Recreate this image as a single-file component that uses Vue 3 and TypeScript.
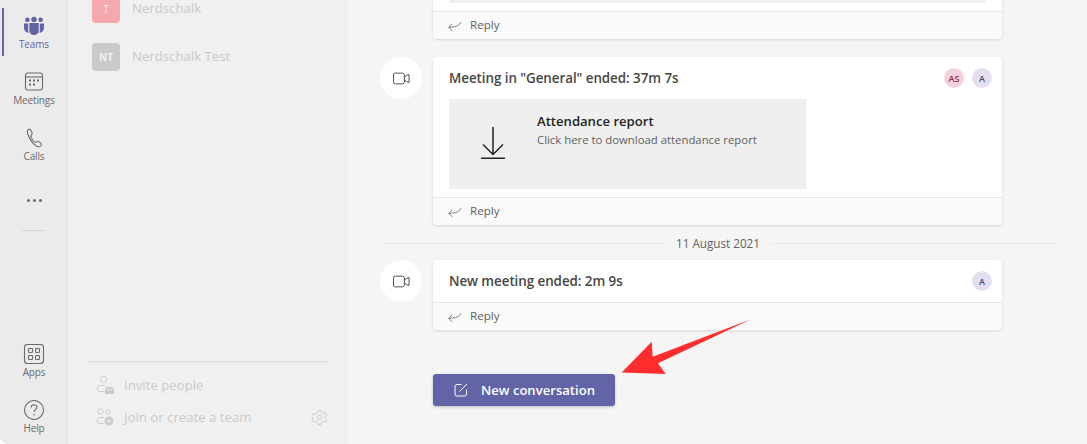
<script setup lang="ts">
interface NavItem { label: string; icon: string; active?: boolean }
const topNav: NavItem[] = [
  { label: 'Teams', icon: 'teams', active: true },
  { label: 'Meetings', icon: 'meetings' },
  { label: 'Calls', icon: 'calls' },
]
const bottomNav: NavItem[] = [
  { label: 'Apps', icon: 'apps' },
  { label: 'Help', icon: 'help' },
]
const teams = [
  { initials: 'T', name: 'Nerdschalk', tone: 'pink' },
  { initials: 'NT', name: 'Nerdschalk Test', tone: 'grey' },
]
</script>

<template>
  <div class="window">
    <nav class="rail">
      <div class="rail-group">
        <div v-for="item in topNav" :key="item.label" class="nav-item" :class="{ active: item.active }">
          <svg class="nav-icon" width="22" height="20" viewBox="0 0 22 20">
            <template v-if="item.icon === 'teams'">
              <circle cx="11" cy="3.400" r="2.700" fill="currentColor" />
              <circle cx="4.400" cy="3.800" r="2.300" fill="currentColor" />
              <circle cx="17.600" cy="3.800" r="2.300" fill="currentColor" />
              <path d="M1 7.500h4.200v7.100c0 .9.2 1.600.5 2.200C3 16.800 1 14.500 1 11.800zM16.800 7.500H21v4.300c0 2.700-2 5-4.700 5 .3-.6.500-1.300.500-2.200z" fill="currentColor" />
              <path d="M6.300 7h9.400v7.400c0 2.700-2.100 4.600-4.700 4.600s-4.700-1.900-4.700-4.600z" fill="currentColor" />
            </template>
            <template v-else-if="item.icon === 'meetings'">
              <rect x="2.500" y="1" width="17" height="17" rx="2.500" fill="none" stroke="currentColor" stroke-width="1.100" />
              <path d="M2.500 5h17" stroke="currentColor" stroke-width="1.100" />
              <g fill="currentColor">
                <rect x="6" y="7.500" width="2" height="2" /><rect x="10" y="7.500" width="2" height="2" /><rect x="14" y="7.500" width="2" height="2" />
                <rect x="6" y="11.500" width="2" height="2" /><rect x="10" y="11.500" width="2" height="2" />
              </g>
            </template>
            <path v-else d="M6 1.200C4 1.800 4.200 4 4.800 6c1 3.400 3 7 5.800 9.800 1.600 1.600 3.800 3 5.600 2.900 1.600-.1 2.300-1.500 2.100-2.600-.2-.9-2.700-2.800-3.700-2.800-1.100 0-1.400 1.200-2.300 1.200-1.300 0-4.400-4.600-4.400-6.400 0-1 1.100-1.200 1.200-2.300C9.200 4.300 7.600.7 6 1.200z" fill="none" stroke="currentColor" stroke-width="1.100" />
          </svg>
          <span class="nav-label">{{ item.label }}</span>
        </div>
        <div class="more"><i></i><i></i><i></i></div>
        <div class="rail-rule"></div>
      </div>
      <div class="rail-group bottom">
        <div v-for="item in bottomNav" :key="item.label" class="nav-item">
          <svg class="nav-icon" width="22" height="20" viewBox="0 0 22 20">
            <template v-if="item.icon === 'apps'">
              <rect x="1.500" y="0.500" width="19" height="19" rx="3" fill="none" stroke="currentColor" stroke-width="1.100" />
              <g fill="none" stroke="currentColor" stroke-width="1.100">
                <rect x="5.500" y="4.500" width="4" height="4" rx=".8" /><rect x="12.500" y="4.500" width="4" height="4" rx=".8" />
                <rect x="5.500" y="11.500" width="4" height="4" rx=".8" /><rect x="12.500" y="11.500" width="4" height="4" rx=".8" />
              </g>
            </template>
            <template v-else>
              <circle cx="11" cy="10" r="9.500" fill="none" stroke="currentColor" stroke-width="1.100" />
              <path d="M8.200 7.600c0-1.700 1.300-2.800 2.900-2.800s2.800 1.100 2.800 2.500c0 2.100-2.900 2.400-2.900 4.700" fill="none" stroke="currentColor" stroke-width="1.100" />
              <circle cx="11" cy="14.700" r=".8" fill="currentColor" />
            </template>
          </svg>
          <span class="nav-label">{{ item.label }}</span>
        </div>
      </div>
    </nav>

    <aside class="panel">
      <ul class="team-list">
        <li v-for="team in teams" :key="team.name" class="team">
          <span class="team-avatar" :class="team.tone">{{ team.initials }}</span>
          <span class="team-name">{{ team.name }}</span>
        </li>
      </ul>
      <div class="panel-foot">
        <div class="foot-row">
          <svg width="18" height="18" viewBox="0 0 18 18" fill="none" stroke="currentColor">
            <circle cx="7.500" cy="3.500" r="3" />
            <path d="M9 9.500H4a3 3 0 0 0 0 6h4" />
            <path d="M9 11h9v7H9z" fill="currentColor" stroke="none" />
            <path d="M9 11.500l4.500 3 4.500-3" stroke="#f0f0f0" />
          </svg>
          <span>Invite people</span>
        </div>
        <div class="foot-row">
          <svg width="18" height="18" viewBox="0 0 18 18" fill="none" stroke="currentColor">
            <circle cx="4.500" cy="3.500" r="2.600" />
            <circle cx="12" cy="4" r="2.200" />
            <path d="M8 9.500H4a3 3 0 0 0 0 6h3.500" />
            <circle cx="13" cy="13" r="4.500" fill="currentColor" stroke="none" />
            <path d="M13 10.800v4.400M10.800 13h4.400" stroke="#f0f0f0" />
          </svg>
          <span class="grow">Join or create a team</span>
          <svg class="gear" width="17" height="17" viewBox="0 0 18 18" fill="none" stroke="currentColor">
            <circle cx="9" cy="9" r="2.300" />
            <path d="M7.500 1.500h3l.5 2.300 1.700 1 2.300-.7 1.500 2.600-1.700 1.600v1.400l1.700 1.600-1.500 2.600-2.300-.7-1.700 1-.5 2.300h-3l-.5-2.300-1.700-1-2.300.7L.5 12.300l1.700-1.600V9.300L.5 7.700 2 5.100l2.300.7 1.700-1z" />
          </svg>
        </div>
      </div>
    </aside>

    <main class="feed">
      <div class="thread">
        <div class="spacer"></div>
        <article class="card clipped">
          <div class="attach-stub"></div>
          <footer class="reply">
            <svg class="reply-icon" width="15" height="11" viewBox="0 0 15 11" fill="none" stroke="currentColor">
              <path d="M14 .8C12.600 4 9 6.300 1 6.300M4.500 2.800L.8 6.300l3.700 3.900" />
            </svg>
            Reply
          </footer>
        </article>
      </div>

      <div class="thread">
        <div class="call-badge">
          <svg width="17" height="13" viewBox="0 0 18 13" fill="none" stroke="currentColor">
            <rect x=".5" y=".8" width="11.500" height="11.400" rx="2" />
            <path d="M12 5l4-2.700h1v8.400h-1l-4-2.700" />
          </svg>
        </div>
        <article class="card">
          <header class="card-head">
            <h3>Meeting in "General" ended: 37m 7s</h3>
            <div class="people">
              <span class="person rose">AS</span>
              <span class="person lilac">A</span>
            </div>
          </header>
          <div class="attachment">
            <div class="download">
              <svg width="26" height="32" viewBox="0 0 26 32" fill="none" stroke="#252423" stroke-width="1.500">
                <path d="M13 0v27M3 17.500l10 10 10-10M1 31.300h24" />
              </svg>
            </div>
            <div class="attach-text">
              <strong>Attendance report</strong>
              <span>Click here to download attendance report</span>
            </div>
          </div>
          <footer class="reply spaced">
            <svg class="reply-icon" width="15" height="11" viewBox="0 0 15 11" fill="none" stroke="currentColor">
              <path d="M14 .8C12.600 4 9 6.300 1 6.300M4.500 2.800L.8 6.300l3.700 3.900" />
            </svg>
            Reply
          </footer>
        </article>
      </div>

      <div class="date-rule"><span>11 August 2021</span></div>

      <div class="thread">
        <div class="call-badge">
          <svg width="17" height="13" viewBox="0 0 18 13" fill="none" stroke="currentColor">
            <rect x=".5" y=".8" width="11.500" height="11.400" rx="2" />
            <path d="M12 5l4-2.700h1v8.400h-1l-4-2.700" />
          </svg>
        </div>
        <article class="card">
          <header class="card-head">
            <h3>New meeting ended: 2m 9s</h3>
            <div class="people">
              <span class="person lilac">A</span>
            </div>
          </header>
          <footer class="reply">
            <svg class="reply-icon" width="15" height="11" viewBox="0 0 15 11" fill="none" stroke="currentColor">
              <path d="M14 .8C12.600 4 9 6.300 1 6.300M4.500 2.800L.8 6.300l3.700 3.900" />
            </svg>
            Reply
          </footer>
        </article>
      </div>

      <button class="compose" type="button">
        <svg width="14" height="14" viewBox="0 0 14 14" fill="none" stroke="#fff">
          <path d="M7.500 1.500H3a2 2 0 0 0-2 2V11a2 2 0 0 0 2 2h7.500a2 2 0 0 0 2-2V6.500" />
          <path d="M5.500 8.500L13 1" />
        </svg>
        New conversation
      </button>
    </main>

    <svg class="callout" width="1087" height="444" viewBox="0 0 1087 444">
      <path d="M621.700 372.500L651.700 341.700L652.700 356.700L751 319.300L658 363.300L665.700 374Z" fill="#ff2d2e" />
    </svg>
  </div>
</template>

<style>
html, body { margin: 0; background: #fff; }
</style>

<style scoped>
.window {
  position: relative;
  display: flex;
  width: 1087px;
  height: 444px;
  overflow: hidden;
  font-family: "Open Sans", "Noto Sans", sans-serif;
  background: #f5f5f5;
  border-bottom-left-radius: 8px;
}
.rail {
  width: 68px;
  flex: none;
  display: flex;
  flex-direction: column;
  justify-content: space-between;
  padding: 8px 0 4px;
  box-sizing: border-box;
  background: #ebebeb;
  box-shadow: inset -3px 0 3px -2px rgba(0, 0, 0, .06);
}
.rail-group { display: flex; flex-direction: column; gap: 8px; }
.nav-item {
  position: relative;
  height: 48px;
  display: flex;
  flex-direction: column;
  align-items: center;
  padding-top: 8px;
  box-sizing: border-box;
  color: #6b6b6b;
}
.nav-item.active { color: #6264a7; }
.nav-item.active::before {
  content: "";
  position: absolute;
  left: 2px;
  top: 0;
  bottom: 0;
  width: 2px;
  background: #6264a7;
}
.nav-icon { flex: none; }
.nav-label { font-size: 10px; line-height: 14px; margin-top: 1px; letter-spacing: -.15px; }
.more {
  height: 48px;
  display: flex;
  align-items: center;
  justify-content: center;
  gap: 3px;
}
.more i { width: 3px; height: 3px; border-radius: 50%; background: #6b6b6b; }
.rail-rule { width: 24px; height: 1px; margin: -2px auto 0; background: #d4d4d4; }

.panel {
  width: 280px;
  flex: none;
  display: flex;
  flex-direction: column;
  justify-content: space-between;
  background: #f0f0f0;
  padding: 0 20px 11px;
  box-sizing: border-box;
  color: #c8c8c8;
  font-size: 13.2px;
}
.team-list { list-style: none; margin: -5px 0 0; padding: 0 0 0 4px; display: flex; flex-direction: column; gap: 20px; }
.team { display: flex; align-items: center; gap: 12px; height: 28px; }
.team-name { position: relative; top: -1px; }
.team-avatar {
  width: 28px;
  height: 28px;
  border-radius: 4px;
  display: flex;
  align-items: center;
  justify-content: center;
  font-size: 10px;
  color: #f2f2f2;
}
.team-avatar.pink { background: #f3a9ae; }
.team-avatar.grey { background: #cacaca; font-weight: 700; }
.panel-foot { border-top: 2px solid #e2e2e2; padding-top: 6px; }
.foot-row { height: 32px; display: flex; align-items: center; gap: 10px; padding-left: 8px; color: #cbcbcb; }
.grow { flex: 1; }

.feed { flex: 1; min-width: 0; padding: 0 31px 0 32px; display: flex; flex-direction: column; }
.thread { display: flex; gap: 11px; margin-bottom: 18px; }
.spacer { width: 42px; flex: none; }
.call-badge {
  width: 42px;
  height: 42px;
  flex: none;
  border-radius: 50%;
  background: #fff;
  display: flex;
  align-items: center;
  justify-content: center;
  color: #484644;
}
.card {
  width: 569px;
  flex: none;
  background: #fff;
  border-radius: 4px;
  box-shadow: 0 1px 3px rgba(0, 0, 0, .13);
}
.card.clipped { border-radius: 0 0 4px 4px; }
.attach-stub { height: 3px; margin: 0 16px 8px; background: #efefef; }
.card-head { height: 42px; display: flex; align-items: center; justify-content: space-between; padding: 0 16px; }
.card-head h3 { margin: 0; font-size: 13.4px; letter-spacing: -.06px; font-weight: 600; color: #484644; }
.people { display: flex; gap: 8px; margin-right: -6px; }
.person {
  width: 20px;
  height: 20px;
  border-radius: 50%;
  display: flex;
  align-items: center;
  justify-content: center;
  font-size: 9px;
  font-weight: 600;
}
.rose { background: #f4d2dd; color: #8a2f53; }
.lilac { background: #e3dfef; color: #4b4678; }
.attachment { width: 357px; height: 90px; margin-left: 16px; background: #efefef; display: flex; }
.download { width: 88px; padding-top: 28px; box-sizing: border-box; display: flex; justify-content: center; }
.attach-text { display: flex; flex-direction: column; padding-top: 12px; }
.attach-text strong { font-size: 13.1px; line-height: 20px; font-weight: 600; color: #252423; }
.attach-text span { font-size: 11.35px; line-height: 18px; color: #616161; }
.reply {
  height: 28px;
  border-top: 1px solid #e6e6e6;
  background: #fafafa;
  border-radius: 0 0 4px 4px;
  box-sizing: border-box;
  display: flex;
  align-items: center;
  gap: 7px;
  padding: 0 0 2px 15px;
  font-size: 11.6px;
  color: #616161;
}
.reply.spaced { margin-top: 8px; }
.reply-icon { color: #757575; margin: 4px 1px 0 0; width: 14px; }
.date-rule {
  height: 1px;
  margin-bottom: 16px;
  background: #e9e9e9;
  position: relative;
  display: flex;
  justify-content: center;
  width: 676px;
}
.date-rule span {
  position: relative;
  top: -9px;
  height: 18px;
  padding: 0 11px;
  background: #f5f5f5;
  font-size: 11.7px;
  line-height: 18px;
  color: #616161;
}
.compose {
  align-self: flex-start;
  width: 182px;
  height: 32px;
  margin: 26px 0 0 53px;
  border: 0;
  border-radius: 3px;
  background: #6264a7;
  box-shadow: 0 1px 3px rgba(0, 0, 0, .25);
  color: #fff;
  font: 600 13.1px "Open Sans", "Noto Sans", sans-serif;
  display: flex;
  align-items: center;
  gap: 13px;
  padding: 0 0 0 21px;
}
.callout { position: absolute; inset: 0; pointer-events: none; }
</style>
